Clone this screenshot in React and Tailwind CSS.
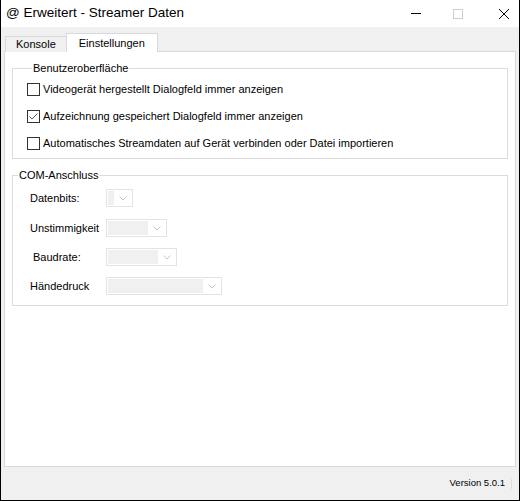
import React from 'react';

function CheckBox({ checked }) {
  return (
    <span className="w-[13px] h-[13px] border border-[#333333] bg-white flex items-center justify-center shrink-0">
      {checked && (
        <svg width="11" height="11" viewBox="0 0 11 11">
          <path d="M1.5 5.5 L4 8 L9.5 2.5" fill="none" stroke="#555555" strokeWidth="1" />
        </svg>
      )}
    </span>
  );
}

function Combo({ width }) {
  return (
    <div className="h-[18px] border border-[#e3e3e3] bg-white flex items-stretch p-px" style={{ width }}>
      <div className="flex-1 bg-[#f0f0f0]" />
      <div className="w-[17px] flex items-center justify-center">
        <svg width="8" height="5" viewBox="0 0 8 5">
          <path d="M0.5 0.5 L4 4 L7.5 0.5" fill="none" stroke="#c4c4c4" strokeWidth="1" />
        </svg>
      </div>
    </div>
  );
}

const comRows = [
  { label: 'Datenbits:', width: 27, pl: 'pl-[17px]', mt: 'mt-[7px]' },
  { label: 'Unstimmigkeit', width: 61, pl: 'pl-[17px]', mt: 'mt-[12px]' },
  { label: 'Baudrate:', width: 71, pl: 'pl-[20px]', mt: 'mt-[11px]' },
  { label: 'Händedruck', width: 116, pl: 'pl-[17px]', mt: 'mt-[11px]' },
];

export default function App() {
  return (
    <div className="w-[520px] h-[501px] flex flex-col bg-[#f0f0f0] border-x border-b border-black text-black font-['Liberation_Sans',Arial,sans-serif]">
      {/* Title bar */}
      <div className="h-[27px] bg-white flex items-center shrink-0">
        <span className="pl-[5px] text-[13.5px] flex-1">@ Erweitert - Streamer Daten</span>
        <div className="flex items-center h-full pr-[10px]">
          <span className="w-[10px] h-px bg-black mr-[32px]" />
          <span className="w-[10px] h-[10px] border border-[#cccccc] mr-[36px]" />
          <svg width="10" height="10" viewBox="0 0 10 10">
            <path d="M0 0 L10 10 M10 0 L0 10" stroke="#000" strokeWidth="1" />
          </svg>
        </div>
      </div>

      {/* Tabs + panel */}
      <div className="flex-1 flex flex-col pl-[3px] pr-[3px] pt-[6px]">
        <div className="flex items-end h-[19px] relative z-10 text-[11px]">
          <div className="h-[16px] px-[10px] ml-px border-t border-l border-[#d9d9d9] bg-[#f0f0f0] leading-[15px]">
            Konsole
          </div>
          <div className="h-[19px] px-[12px] border-t border-x border-[#d9d9d9] bg-white leading-[18px]">
            Einstellungen
          </div>
        </div>
        <div className="flex-1 bg-white border border-[#d9d9d9] -mt-px px-[7px] pt-[9px] text-[11px]">
          <fieldset className="border border-[#dcdcdc] pl-[14px] pb-[8px]">
            <legend className="ml-[5px] px-px leading-[14px]">Benutzeroberfläche</legend>
            <div className="flex flex-col gap-[14px] mt-[8px]">
              <label className="flex items-center gap-[3px] h-[13px]"><CheckBox />Videogerät hergestellt Dialogfeld immer anzeigen</label>
              <label className="flex items-center gap-[3px] h-[13px]"><CheckBox checked />Aufzeichnung gespeichert Dialogfeld immer anzeigen</label>
              <label className="flex items-center gap-[3px] h-[13px]"><CheckBox />Automatisches Streamdaten auf Gerät verbinden oder Datei importieren</label>
            </div>
          </fieldset>
          <fieldset className="border border-[#dcdcdc] mt-[9px] pb-[10px]">
            <legend className="ml-[5px] px-px leading-[14px]">COM-Anschluss</legend>
            {comRows.map((r) => (
              <div key={r.label} className={`flex items-center ${r.mt}`}>
                <span className={`${r.pl} w-[93px]`}>{r.label}</span>
                <Combo width={r.width} />
              </div>
            ))}
          </fieldset>
        </div>
      </div>

      {/* Footer */}
      <div className="h-[33px] shrink-0 flex items-center justify-end pr-[7px] text-[9.5px]">
        <span>Version 5.0.1</span>
        <span className="w-px h-[10px] bg-[#dddddd] ml-[6px]" />
      </div>
    </div>
  );
}
